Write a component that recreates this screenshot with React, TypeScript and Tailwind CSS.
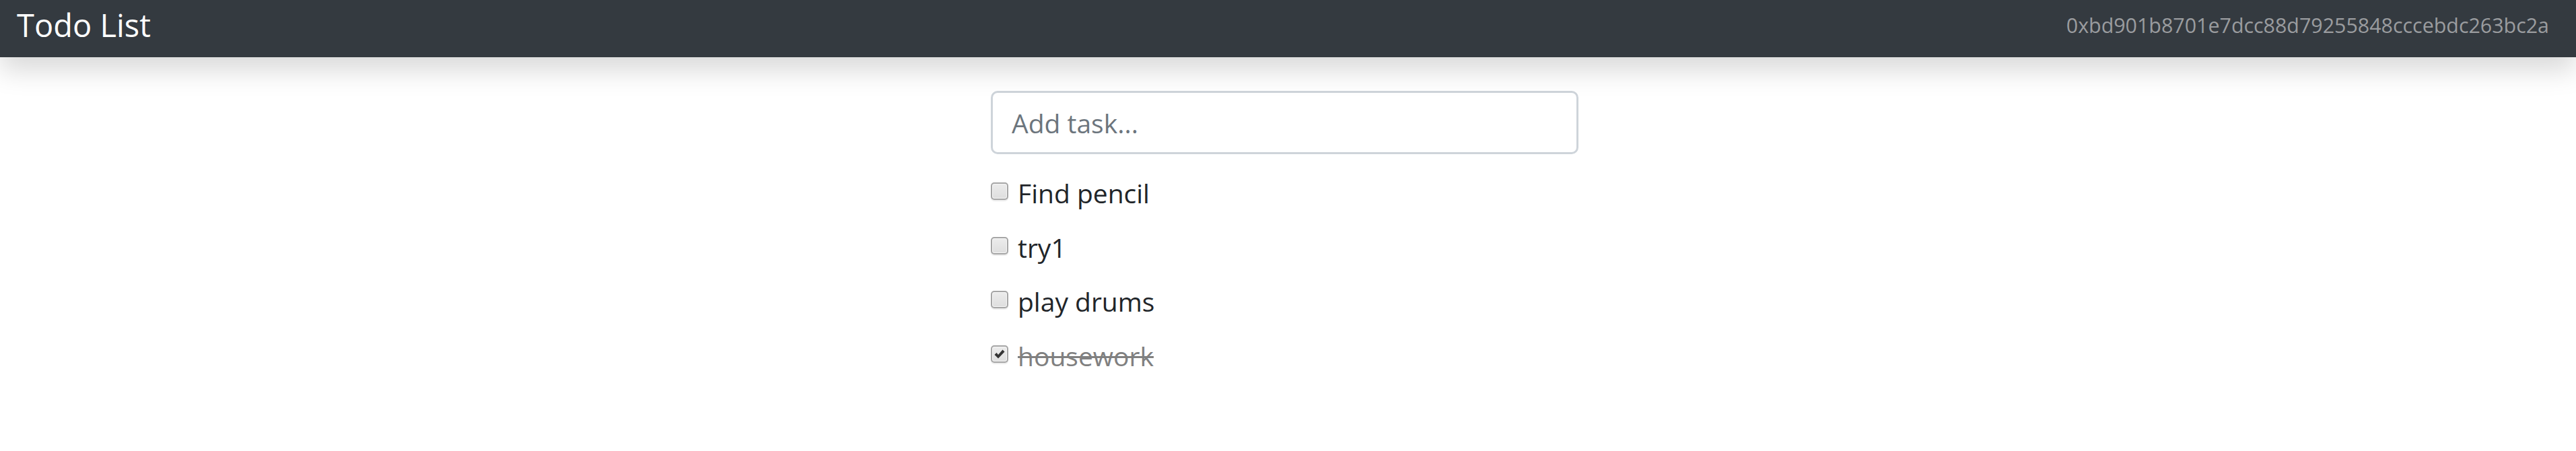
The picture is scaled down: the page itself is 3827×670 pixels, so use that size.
import { useState } from "react";

type Task = { id: number; text: string; done: boolean };

const initialTasks: Task[] = [
  { id: 1, text: "Find pencil", done: false },
  { id: 2, text: "try1", done: false },
  { id: 3, text: "play drums", done: false },
  { id: 4, text: "housework", done: true },
];

function Checkbox({ checked, onToggle }: { checked: boolean; onToggle: () => void }) {
  return (
    <button
      type="button"
      onClick={onToggle}
      className="mt-[13px] flex h-[26px] w-[26px] shrink-0 items-center justify-center rounded-[5px] border-2 border-[#a6a6a6] bg-gradient-to-b from-[#ececec] to-[#dedede] shadow-[0_2px_1px_rgba(0,0,0,0.08),inset_0_0_0_1px_#f7f7f7]"
    >
      {checked && (
        <svg width="18" height="16" viewBox="0 0 18 16">
          <path d="M1.5 9 L4.5 6 L7 9 L13.5 1.5 L16.5 4.5 L7 14.5 Z" fill="#333" />
        </svg>
      )}
    </button>
  );
}

export default function App() {
  const [tasks, setTasks] = useState<Task[]>(initialTasks);
  const [draft, setDraft] = useState("");

  const toggle = (id: number) =>
    setTasks((ts) => ts.map((t) => (t.id === id ? { ...t, done: !t.done } : t)));

  return (
    <div className="min-h-[670px] bg-white font-['Open_Sans',sans-serif] text-[#212529]">
      <nav className="relative z-10 flex h-[85px] items-center justify-between bg-[#343a40] pb-[11px] pl-[25px] pr-[40px] shadow-[0_20px_39px_rgba(0,0,0,0.15)]">
        <span className="text-[47px] leading-[74px] text-white">Todo List</span>
        <span className="text-[30.4px] leading-[45px] text-[#9a9c9f]">0xbd901b8701e7dcc88d79255848cccebdc263bc2a</span>
      </nav>

      <main className="flex justify-center pr-[10px] pt-[50px]">
        <div className="w-[873px]">
          <form
            onSubmit={(e) => {
              e.preventDefault();
              if (!draft.trim()) return;
              setTasks((ts) => [...ts, { id: Date.now(), text: draft.trim(), done: false }]);
              setDraft("");
            }}
          >
            <input
              value={draft}
              onChange={(e) => setDraft(e.target.value)}
              placeholder="Add task..."
              className="block h-[94px] w-full rounded-[10px] border-[3px] border-[#ced4da] bg-white px-[28px] text-[39px] text-[#495057] outline-none placeholder:text-[#6c757d]"
            />
          </form>

          <ul className="mt-[29px] flex flex-col gap-[22px]">
            {tasks.map((t) => (
              <li key={t.id} className="flex items-start gap-[14px] text-[39px] leading-[58.5px]">
                <Checkbox checked={t.done} onToggle={() => toggle(t.id)} />
                <span className={t.done ? "text-[#808080] line-through decoration-[3px]" : ""}>{t.text}</span>
              </li>
            ))}
          </ul>
        </div>
      </main>
    </div>
  );
}
